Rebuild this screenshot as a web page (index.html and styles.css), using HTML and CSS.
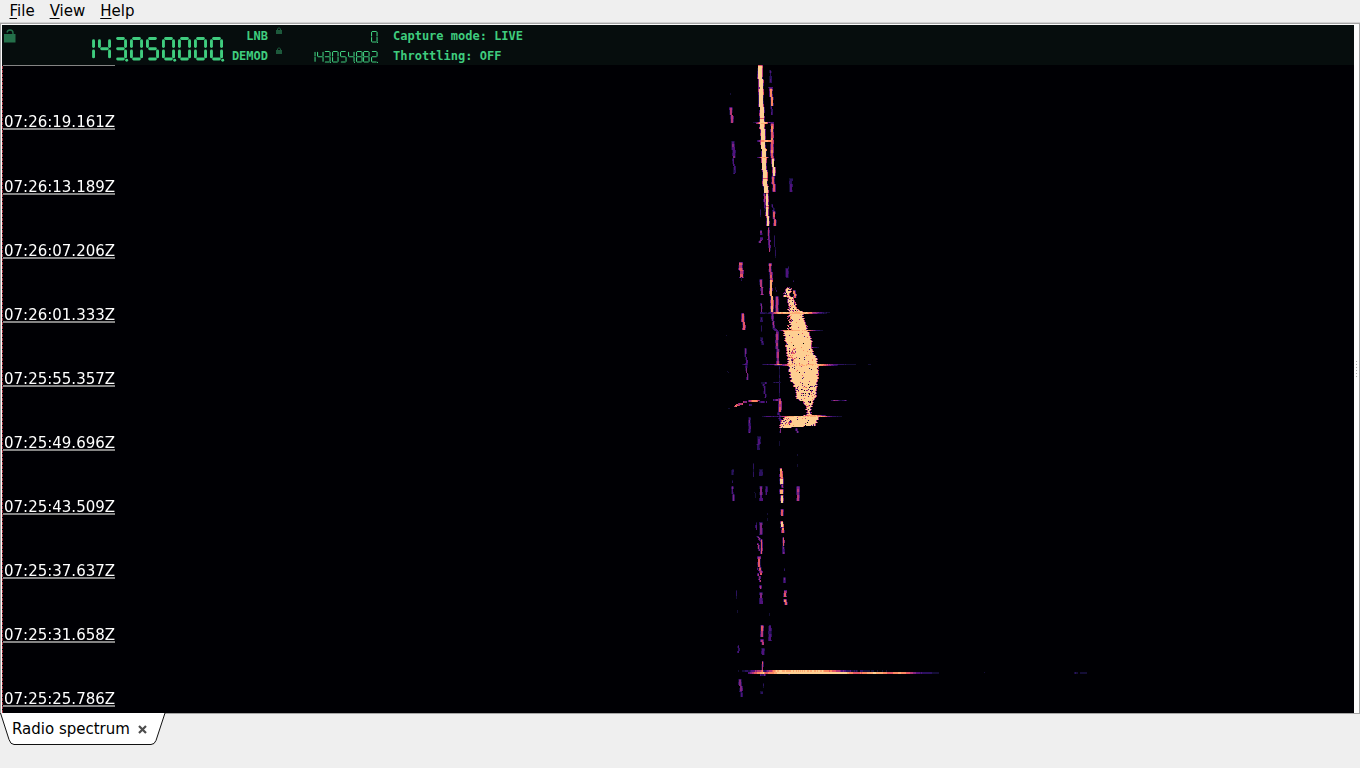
FILE: index.html
```html
<!doctype html>
<html lang="en">
  <head>
    <meta charset="utf-8" />
    <title>Radio spectrum</title>
    <link rel="stylesheet" href="styles.css">
  </head>

  <body>
    <nav class="menu-bar">
      <span><u>F</u>ile</span>
      <span><u>V</u>iew</span>
      <span><u>H</u>elp</span>
    </nav>

    <main class="pane">
      <section class="receiver">
        <div class="status">
          <div class="lock-column">
            <svg class="lock-big" width="12" height="14" viewBox="0 0 12 14">
              <path d="M3 3.500 Q3.500 1 6 1 Q9 1 9 4 V6" fill="none" stroke="currentColor" stroke-width="1.4" />
              <rect x="0" y="5" width="11.500" height="8.500" fill="currentColor" />
            </svg>
          </div>
          <div class="lcd lcd-main" data-value="143050000"></div>
          <div class="names">
            <span>LNB</span>
            <span>DEMOD</span>
          </div>
          <div class="locks">
            <svg width="6" height="8" viewBox="0 0 6 8">
              <path d="M1.5 3 V1.8 Q3 -.2 4.5 1.8 V3" fill="none" stroke="currentColor" />
              <rect y="3" width="6" height="4" fill="currentColor" />
            </svg>
            <svg width="6" height="8" viewBox="0 0 6 8">
              <path d="M1.5 3 V1.8 Q3 -.2 4.5 1.8 V3" fill="none" stroke="currentColor" />
              <rect y="3" width="6" height="4" fill="currentColor" />
            </svg>
          </div>
          <div class="values">
            <div class="lcd lcd-small" data-value="0"></div>
            <div class="lcd lcd-small" data-value="143054882"></div>
          </div>
          <div class="modes">
            <span>Capture mode: LIVE</span>
            <span>Throttling: OFF</span>
          </div>
        </div>

        <div class="waterfall">
          <canvas id="spectrum" width="1352" height="648"></canvas>
          <div class="times">
            <span></span>
            <span>07:26:19.161Z</span>
            <span>07:26:13.189Z</span>
            <span>07:26:07.206Z</span>
            <span>07:26:01.333Z</span>
            <span>07:25:55.357Z</span>
            <span>07:25:49.696Z</span>
            <span>07:25:43.509Z</span>
            <span>07:25:37.637Z</span>
            <span>07:25:31.658Z</span>
            <span>07:25:25.786Z</span>
          </div>
        </div>
      </section>

      <div class="splitter">
        <i></i><i></i><i></i><i></i><i></i><i></i>
      </div>
    </main>

    <footer class="tabs">
      <div class="tab">
        <svg class="tab-shape" width="166" height="32" viewBox="0 0 166 32">
          <path d="M0.5 0 L9 26.5 Q10.5 31.5 14 31.5 H151 Q154.500 31.5 156 27.500 L165 0" fill="#fff" stroke="#111" />
        </svg>
        <span class="tab-title">Radio spectrum</span>
        <svg class="tab-close" width="9" height="9" viewBox="0 0 9 9">
          <path d="M1 1 L8 8 M8 1 L1 8" stroke="#4d4d4d" stroke-width="2.2" />
        </svg>
      </div>
    </footer>

    <script src="script.js"></script>
  </body>
</html>
```

FILE: styles.css
```css
body {
  display: flex;
  flex-direction: column;
  height: 768px;
  margin: 0;
  overflow: hidden;
  background-color: #efefef;
  color: #000;
  font-family: 'DejaVu Sans', sans-serif;
  font-size: 15px;
}

.menu-bar {
  display: flex;
  gap: 15px;
  height: 22px;
  padding-left: 9.5px;
  line-height: 22px;
  border-bottom: 1px solid #d2d2d2;
}

.menu-bar u {
  text-underline-offset: 2px;
  text-decoration-thickness: 1px;
}

.pane {
  display: flex;
  box-sizing: border-box;
  height: 691px;
  border: 1px solid #a5a5a5;
  background-color: #fcfcfc;
  padding: 1px 0 0 1px;
}

.receiver {
  width: 1352px;
}

/* Status strip */
.status {
  display: flex;
  height: 40px;
  background-color: #060d0d;
  color: #3fcc7e;
  font: bold 12px/20px 'DejaVu Sans Mono', monospace;
}

.lock-column {
  width: 80px;
  padding: 4px 0 0 2px;
  box-sizing: border-box;
  color: #24704a;
}

.lock-column svg {
  display: block;
}

.lcd {
  display: flex;
  color: #3fcc7e;
}

.digit {
  display: block;
  overflow: visible;
}

.lcd-main {
  padding-top: 12px;
  width: 148px;
}

.names {
  display: flex;
  flex-direction: column;
  width: 38px;
  text-align: right;
  white-space: nowrap;
}

.names,
.modes {
  padding-top: 1px;
}

.locks {
  display: flex;
  flex-direction: column;
  gap: 12px;
  padding: 2px 0 0 8px;
  color: #1d5a3c;
}

.values {
  display: flex;
  flex-direction: column;
  align-items: flex-end;
  width: 97px;
}

.lcd-small {
  height: 14px;
  padding-top: 6px;
}

.modes {
  display: flex;
  flex-direction: column;
  margin-left: 14px;
}

/* Waterfall */
.waterfall {
  position: relative;
  height: 648px;
  background-color: #000004;
}

.waterfall canvas {
  display: block;
}

.times {
  position: absolute;
  left: 1px;
  top: 0;
  display: flex;
  flex-direction: column;
  width: 112px;
  color: #fff;
}

.times span {
  height: 64px;
  box-sizing: border-box;
  padding: 47px 0 0 1px;
  line-height: 18px;
  border-bottom: 2px solid #848484;
}

.times span:first-child {
  height: 1px;
  padding: 0;
  border-bottom-width: 1px;
}

.times span:nth-child(2) {
  margin-bottom: 1px;
}

.splitter {
  display: flex;
  flex-direction: column;
  justify-content: center;
  align-items: center;
  gap: 2px;
  width: 5px;
}

.splitter i {
  width: 1px;
  height: 1px;
  background-color: #aaa;
}

/* Tabs */
.tabs {
  height: 54px;
}

.tab {
  position: relative;
  display: flex;
  align-items: center;
  gap: 8px;
  width: 154px;
  height: 30px;
  padding-left: 12px;
}

.tab-shape {
  position: absolute;
  left: 0;
  top: -1px;
}

.tab-title,
.tab-close {
  position: relative;
}
```

FILE: script.js
```js
// Segments lit for each digit: a top, b/c right, d bottom, e/f left, g middle
const SEGMENTS = {
  0: 'abcdef', 1: 'bc', 2: 'abdeg', 3: 'abcdg', 4: 'bcfg',
  5: 'acdfg', 6: 'acdefg', 7: 'abc', 8: 'abcdefg', 9: 'abcdfg'
};

function segmentLines(w, h, t) {
  const r = w - t / 2, l = t / 2, m = h / 2, b = h - t / 2, k = t * 0.75;
  return {
    a: [l + k, l, r - k, l],
    b: [r, l + k, r, m - k],
    c: [r, m + k, r, b - k],
    d: [l + k, b, r - k, b],
    e: [l, m + k, l, b - k],
    f: [l, l + k, l, m - k],
    g: [l + k, m, r - k, m]
  };
}

function drawLcd(el, pitch, w, h, t) {
  const value = el.dataset.value;
  const lines = segmentLines(w, h, t);
  el.setAttribute('aria-label', value);
  el.innerHTML = [...value].map((n, i) => {
    const segs = [...SEGMENTS[n]].map(s => {
      const [x1, y1, x2, y2] = lines[s];
      return `<line x1="${x1}" y1="${y1}" x2="${x2}" y2="${y2}" />`;
    }).join('');
    // Group separator after every third digit from the right
    const dot = (value.length - i - 1) % 3 == 0
      ? `<circle cx="${w - t * 0.1}" cy="${h - t * 0.1}" r="${t * 0.5}" stroke="none" fill="currentColor" />` : '';
    return `<svg class="digit" width="${pitch}" height="${h}" stroke="currentColor" stroke-width="${t}" stroke-linecap="round">${segs}${dot}</svg>`;
  }).join('');
}

drawLcd(document.querySelector('.lcd-main'), 16, 13, 23.5, 2.9);
document.querySelectorAll('.lcd-small').forEach(el => drawLcd(el, 7.8, 6.6, 11.5, 1.1));

// Waterfall, positions are in window coordinates
const ctx = document.getElementById('spectrum').getContext('2d');
ctx.translate(-2, -65);

const PALETTE = ['#000004', '#140e36', '#2b115f', '#51127c', '#812581', '#b63679', '#e35665', '#fb8861', '#fea973', '#fecf92'];

let seed = 7;
function rnd() {
  seed = (seed * 16807) % 2147483647;
  return seed / 2147483647;
}

function dot(x, y, level, w = 1, h = 1) {
  ctx.fillStyle = PALETTE[Math.max(0, Math.min(9, Math.round(level)))];
  ctx.fillRect(Math.round(x), Math.round(y), w, h);
}

// Nearly vertical carrier with soft edges
function trail(x0, y0, x1, y1, w, level) {
  let left = 0, right = 0, dip = 0;
  for (let y = y0; y < y1; y++) {
    const x = Math.round(x0 + (x1 - x0) * (y - y0) / (y1 - y0));
    const fade = Math.min(1, (y - y0 + 2) / 3, (y1 - y + 1) / 2);
    if ((y - y0) % 3 == 0) {
      left = rnd() * level * 0.6;
      right = rnd() * level * 0.75;
      dip = rnd();
    }
    if (level > 2) {
      dot(x - 1, y, left * fade);
      dot(x + w, y, right * fade);
    }
    dot(x, y, level * fade - (level < 9 ? dip * 0.8 : 0), w);
  }
}

// Horizontal burst, stops are [x, level]
function burst(y, stops, h = 1, noise = 1) {
  for (let i = 0; i < stops.length - 1; i++) {
    const [xa, la] = stops[i], [xb, lb] = stops[i + 1];
    for (let x = xa; x < xb; x++) {
      dot(x, y, la + (lb - la) * (x - xa) / (xb - xa) - rnd() * noise, 1, h);
    }
  }
}

// Solid echo, rows are [y, left, right]
function echo(rows, holes) {
  for (let i = 0; i < rows.length - 1; i++) {
    const [ya, la, ra] = rows[i], [yb, lb, rb] = rows[i + 1];
    for (let y = ya; y < yb; y++) {
      const f = (y - ya) / (yb - ya);
      const l = Math.round(la + (lb - la) * f + rnd() * 2 - 1);
      const r = Math.round(ra + (rb - ra) * f + rnd() * 2 - 1);
      dot(l - 1, y, 3 + rnd() * 3);
      dot(l, y, 9, r - l);
      dot(r, y, 3 + rnd() * 3);
      for (let x = l; x < r; x++) {
        if (rnd() < holes) dot(x, y, rnd() * 8);
      }
    }
  }
}

const TRAILS = [
  // main carrier
  [758, 65, 760, 120, 4, 9], [760, 118, 763, 180, 4, 9], [763, 178, 764, 193, 4, 9],
  [764, 193, 765, 211, 2, 5], [766, 193, 766, 206, 2, 9], [766, 206, 767, 226, 2, 9],
  [768, 227, 769, 252, 1, 5], [769, 263, 770, 280, 2, 6], [770, 279, 771, 313, 2, 8],
  [772, 313, 773, 328, 1, 5], [773, 328, 777, 332, 2, 4], [776, 331, 777, 366, 2, 5],
  [779, 366, 779, 397, 1, 2], [779, 398, 779, 412, 2, 6], [778, 412, 781, 426, 1, 3],
  // side carrier
  [770, 70, 770, 83, 1, 3], [770, 88, 771, 106, 2, 7], [771, 106, 771, 115, 1, 3],
  [771, 123, 771, 158, 2, 7], [772, 158, 773, 176, 2, 9], [772, 176, 773, 192, 2, 6],
  [772, 204, 773, 211, 1, 3], [773, 211, 774, 226, 2, 6], [774, 235, 775, 258, 1, 2],
  [776, 296, 776, 313, 2, 5], [775, 287, 776, 292, 1, 2],
  // left echoes
  [730, 92, 730, 100, 1, 1], [730, 107, 731, 123, 2, 5], [732, 141, 733, 158, 2, 4],
  [733, 158, 734, 174, 1, 3], [739, 262, 740, 278, 3, 6], [741, 277, 741, 281, 1, 2],
  [742, 313, 743, 330, 2, 6], [745, 348, 746, 365, 1, 4], [746, 365, 747, 380, 1, 4],
  [725, 332, 726, 336, 1, 1], [727, 370, 728, 373, 1, 1], [749, 417, 749, 433, 1, 4],
  [758, 436, 757, 450, 2, 3], [790, 178, 790, 192, 2, 3],
  // 761 line
  [760, 209, 760, 217, 1, 2], [760, 230, 760, 235, 2, 4], [760, 237, 759, 243, 2, 4],
  [760, 279, 761, 295, 2, 5], [761, 303, 761, 314, 1, 4], [761, 317, 761, 322, 1, 3],
  [761, 325, 761, 332, 1, 2], [761, 337, 762, 345, 1, 3], [763, 382, 765, 398, 1, 3],
  [760, 469, 760, 476, 2, 3], [760, 486, 760, 501, 2, 4], [760, 522, 760, 535, 2, 4],
  [756, 522, 756, 530, 1, 3], [757, 536, 761, 541, 1, 5], [761, 539, 761, 554, 1, 6],
  [757, 543, 759, 551, 1, 5], [758, 556, 758, 570, 2, 6], [759, 567, 760, 575, 2, 6],
  [758, 573, 760, 582, 1, 5], [760, 585, 760, 589, 1, 5], [760, 592, 760, 604, 2, 4],
  // lower half
  [732, 469, 732, 475, 1, 3], [732, 480, 732, 483, 1, 2], [732, 486, 733, 501, 1, 4],
  [753, 463, 753, 477, 1, 2], [754, 486, 755, 499, 1, 1], [766, 486, 766, 495, 1, 3],
  [767, 512, 767, 525, 1, 1], [797, 486, 797, 501, 2, 5], [797, 453, 797, 456, 1, 1],
  [797, 464, 797, 468, 1, 1], [780, 468, 781, 485, 2, 8], [780, 478, 780, 484, 3, 9],
  [782, 484, 782, 488, 1, 5], [780, 489, 780, 494, 3, 8], [781, 495, 781, 503, 2, 9],
  [781, 509, 781, 516, 2, 6], [781, 521, 781, 528, 2, 9], [782, 527, 782, 533, 2, 7],
  [783, 537, 783, 547, 1, 6], [783, 546, 783, 554, 1, 4], [784, 568, 784, 571, 1, 2],
  [784, 577, 784, 583, 1, 4], [784, 590, 784, 597, 2, 6], [784, 599, 785, 605, 2, 7],
  [779, 440, 779, 447, 1, 1], [780, 428, 780, 433, 1, 4], [796, 428, 797, 433, 1, 4],
  [736, 590, 736, 599, 1, 2], [737, 610, 737, 613, 1, 2], [769, 613, 769, 617, 1, 1],
  [769, 625, 769, 641, 2, 3], [761, 625, 761, 637, 2, 6], [761, 639, 762, 645, 2, 5],
  [762, 648, 762, 655, 2, 3], [762, 661, 762, 671, 1, 6], [738, 645, 738, 653, 1, 3],
  [739, 679, 740, 692, 2, 4], [741, 692, 741, 697, 1, 3], [763, 683, 763, 688, 1, 2],
  [761, 691, 761, 694, 2, 3], [786, 268, 786, 278, 2, 3], [788, 266, 788, 269, 1, 2],
  [793, 280, 793, 282, 1, 2], [789, 69, 789, 72, 1, 1]
];
TRAILS.forEach(t => trail(...t));

burst(87, [[758, 4], [760, 6]], 2);
burst(87, [[768, 3], [773, 4]], 1);
burst(122, [[753, 1], [757, 5], [760, 9], [766, 9], [768, 4], [774, 3]], 1);
burst(123, [[756, 4], [759, 9], [766, 8], [768, 3]], 1);
burst(140, [[757, 2], [761, 7], [765, 9], [771, 7], [774, 4]], 2);
burst(157, [[757, 2], [761, 8], [766, 8], [769, 2]], 1);

// Head of the echo is a loose ring
echo([[287, 788, 790], [290, 786, 791], [292, 785, 789], [296, 785, 789], [297, 788, 793], [302, 788, 795], [306, 790, 795], [311, 788, 799]], 0.25);
trail(793, 290, 794, 298, 2, 7);
echo([[311, 790, 802], [318, 791, 803], [324, 791, 806], [330, 791, 807], [331, 784, 808],
  [340, 786, 811], [350, 788, 812], [358, 788, 816], [366, 789, 818], [372, 790, 818],
  [381, 792, 817], [385, 795, 816], [392, 796, 816], [398, 797, 815], [401, 802, 813]], 0.035);
echo([[401, 804, 812], [405, 806, 811], [409, 807, 810], [415, 808, 810]], 0.25);
echo([[415, 804, 816], [417, 785, 818], [421, 782, 817], [425, 780, 814], [427, 780, 791], [428, 780, 784]], 0.05);

// Darker speckle on the left flank
for (let i = 0; i < 60; i++) {
  dot(788 + rnd() * 8, 348 + rnd() * 16, 3 + rnd() * 6);
}
for (let i = 0; i < 40; i++) {
  dot(787 + rnd() * 4, 315 + rnd() * 14, 3 + rnd() * 6);
  dot(796 + rnd() * 17, 384 + rnd() * 12, rnd() * 7);
  dot(783 + rnd() * 8, 418 + rnd() * 6, 2 + rnd() * 7);
}

burst(312, [[760, 3], [767, 1], [774, 6], [778, 9], [806, 9], [813, 6], [820, 3], [830, 1]], 1);
burst(313, [[760, 3], [767, 1], [774, 6], [778, 8], [806, 9], [811, 6], [818, 3], [827, 1]], 1);
burst(330, [[779, 2], [784, 8], [807, 9], [811, 6], [816, 3], [823, 1]], 1);
burst(347, [[811, 6], [814, 3], [819, 1]], 1);
burst(364, [[762, 2], [774, 4], [778, 8], [783, 4], [790, 9], [818, 9], [826, 6], [832, 4], [845, 2], [856, 1]], 1);
burst(365, [[774, 2], [782, 3], [790, 9], [818, 9], [830, 4], [838, 1]], 1);
burst(364, [[868, 1], [871, 2]], 1);
burst(364, [[742, 2], [746, 4]], 1);
burst(382, [[761, 2], [767, 3]], 2, 2);
burst(382, [[773, 2], [781, 3]], 1, 2);
burst(406, [[734, 6], [737, 8]], 1);
burst(405, [[735, 7], [740, 6]], 1);
burst(404, [[736, 6], [742, 5]], 1);
burst(403, [[738, 5], [743, 6]], 2);
burst(401, [[743, 5], [747, 4]], 2);
burst(400, [[748, 4], [752, 8], [756, 7], [760, 4]], 2);
burst(401, [[758, 3], [762, 4], [769, 2]], 2, 3);
burst(399, [[773, 3], [780, 5]], 2, 2);
burst(404, [[749, 3], [752, 2]], 2);
burst(408, [[728, 2], [730, 2]], 1);
burst(400, [[831, 2], [834, 5], [837, 4], [840, 1], [845, 4], [847, 1]], 1);
burst(416, [[762, 2], [768, 3], [777, 3], [784, 6], [790, 9], [816, 9], [824, 7], [831, 3], [843, 1]], 1);
burst(415, [[805, 5], [810, 9], [816, 8], [822, 4], [826, 2]], 1);

burst(670, [[737, 1], [741, 2], [748, 2], [755, 5], [762, 7], [764, 2], [768, 5], [776, 9]], 2, 2);
burst(670, [[776, 9], [820, 9], [835, 6]], 2, 1);
burst(670, [[835, 6], [848, 3], [862, 2], [890, 1]], 2, 2);
burst(672, [[748, 3], [757, 7], [763, 9], [765, 6], [774, 8], [778, 9], [845, 9], [855, 6], [864, 7], [873, 9], [881, 8], [888, 6], [900, 8], [909, 6], [917, 3], [930, 2], [939, 1]], 2, 0.5);
burst(674, [[760, 4], [762, 2], [764, 4], [766, 2]], 2);
burst(674, [[787, 1], [790, 2]], 1);
burst(672, [[1070, 1], [1073, 0], [1075, 2], [1079, 1], [1083, 2], [1087, 1]], 2);
burst(672, [[984, 1], [985, 1]], 1, 0);

// Red dashes along the left edge
ctx.fillStyle = '#a03440';
for (let y = 66; y < 713; y += 4) {
  ctx.fillRect(2, y, 1, 3);
}
```
